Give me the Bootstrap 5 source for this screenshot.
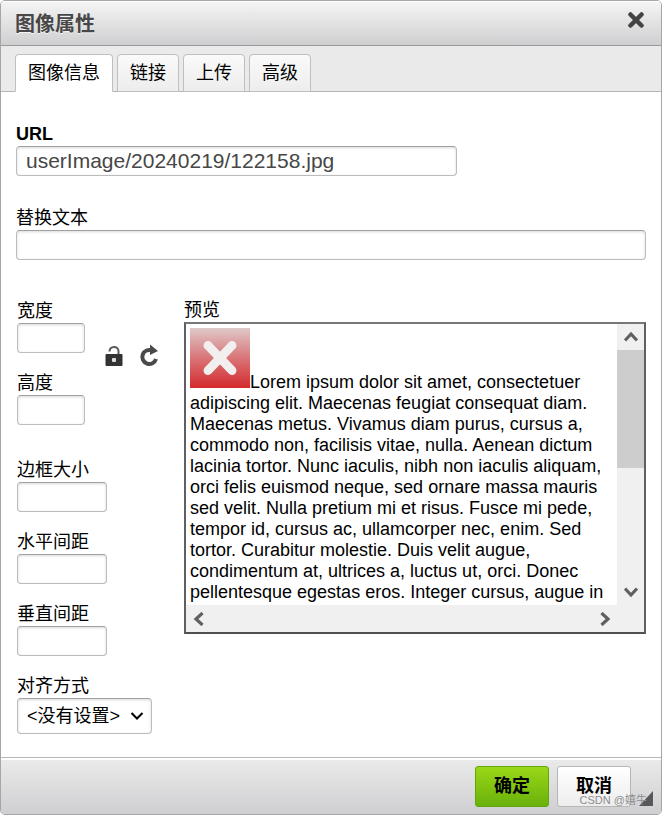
<!DOCTYPE html>
<html lang="zh-CN">
<head>
<meta charset="utf-8">
<meta name="viewport" content="width=device-width, initial-scale=1">
<title>图像属性</title>
<link href="https://cdn.jsdelivr.net/npm/bootstrap@5.3.0/dist/css/bootstrap.min.css" rel="stylesheet">
<style>
body { font-family: "Liberation Sans", "Noto Sans CJK SC", sans-serif; font-size: 18px; line-height: 24px; color: #000; background: #fff; }
.dialog { border: 1px solid #a6a6a6; border-radius: 5px; min-height: 100vh; overflow: hidden; }
.dlg-title { height: 45px; padding: 2px 16px 0 14px; border-bottom: 1px solid #999; background: linear-gradient(#f5f5f5, #cfcfd1); box-shadow: inset 0 1px 0 #fff; }
.dlg-title h1 { font-size: 20px; line-height: 24px; font-weight: 700; color: #474747; text-shadow: 0 1px 0 rgba(255,255,255,.75); }
.icon-btn { border: 0; background: none; padding: 0; line-height: 0; }
.dlg-tabs { height: 46px; padding: 0 14px; background: #eaeaea; border-bottom: 1px solid #b6b6b6; gap: 4px; }
.dlg-tabs .nav-link { height: 38px; padding: 6px 12px; line-height: 24px; color: #000; border: 1px solid #bfbfbf; border-radius: 4px 4px 0 0; background: linear-gradient(#fafafa, #ededed); margin-bottom: -1px; }
.dlg-tabs .nav-link.active { background: #fff; color: #000; border-color: #bfbfbf #bfbfbf #fff; }
.dlg-body { padding: 30px 15px 23px; }
.field label { display: block; line-height: 24px; }
.caption-text { display: block; line-height: 23px; }
.dialog .form-control, .dialog .form-select { border: 1px solid #bcbcbc; border-top-color: #a0a0a0; border-radius: 4px; box-shadow: inset 0 1px 3px rgba(0,0,0,.15); color: #000; }
.dialog .form-control { height: 30px; padding: 0 9px; font-size: 21px; line-height: 28px; color: #474747; }
.dialog .form-select { height: 36px; width: 135px; padding: 0 30px 0 9px; font-size: 18px; line-height: 32px; background-color: #fff; background-image: url("data:image/svg+xml,%3Csvg xmlns='http://www.w3.org/2000/svg' viewBox='0 0 14 10'%3E%3Cpath d='M1.5 2l5.500 5.500L12.500 2' fill='none' stroke='%23000' stroke-width='2'/%3E%3C/svg%3E"); background-position: right 7px center; background-size: 14px 10px; }
.url-box { width: 70%; }
.side { width: 168px; padding-left: 1px; flex: none; }
.w-size { width: 68px; }
.w-space { width: 90px; }
.stack-fields { display: grid; gap: 18px; }
.size-tools { gap: 15px; margin-left: 19px; padding-top: 12px; }
.spaced { margin-top: 30px; }
.lower { margin-top: 39px; }
.spacing-group { margin-top: 33px; }
.preview { min-width: 0; }
.preview-frame { border: 2px solid #606062; border-top-color: #77777a; border-bottom-color: #505052; display: grid; grid-template-columns: 1fr 27px; }
.preview-frame .view { padding: 4px 0 0 4px; font-size: 18px; line-height: 21px; height: 281px; overflow: hidden; }
.preview-frame .view svg { vertical-align: baseline; }
.bar-v, .bar-h { background: #f0f0f0; }
.bar-v .icon-btn { height: 26px; }
.thumb { height: 118px; background: #cdcdcd; }
.bar-h { grid-column: 1 / 3; height: 27px; padding: 0 33px 0 7px; }
.dlg-foot { height: 57px; padding: 0 30px 0 16px; gap: 8px; border-top: 1px solid #b6b6b6; background: linear-gradient(#ebebeb, #cfcfd1); box-shadow: inset 0 2px 0 #fff; }
.dlg-foot .btn { height: 41px; padding: 0 18px; font-size: 18px; font-weight: 700; border-radius: 3px; color: #000; }
.btn-ok { border: 1px solid #62a60a; background: linear-gradient(#9ad717, #69b10b); }
.btn-no { border: 1px solid #b6b6b6; background: linear-gradient(#fff, #ededed); }
.grip { right: 8px; bottom: 8px; width: 14px; height: 15px; background: #58585a; clip-path: polygon(100% 0, 100% 100%, 0 100%); }
.credit { right: 14px; bottom: 6px; font-size: 11px; line-height: 16px; color: #8d8d8f; white-space: nowrap; pointer-events: none; }
</style>
<script src="https://cdn.jsdelivr.net/npm/bootstrap@5.3.0/dist/js/bootstrap.bundle.min.js"></script>
</head>
<body>
<main class="dialog d-flex flex-column">
  <header class="dlg-title d-flex justify-content-between align-items-center">
    <h1 class="mb-0">图像属性</h1>
    <button class="icon-btn mb-2" type="button" aria-label="关闭"><svg width="18" height="16" viewBox="0 0 18 16"><path d="M3.500 2.500l11 11M14.500 2.500l-11 11" fill="none" stroke="#444446" stroke-width="4.500" stroke-linecap="round"/></svg></button>
  </header>
  <nav class="dlg-tabs nav align-items-end">
    <a class="nav-link active" href="#info" aria-current="page">图像信息</a>
    <a class="nav-link" href="#link">链接</a>
    <a class="nav-link" href="#upload">上传</a>
    <a class="nav-link" href="#advanced">高级</a>
  </nav>
  <form class="dlg-body flex-grow-1" id="info">
    <div class="field">
      <label class="fw-bold" for="url">URL</label>
      <input class="form-control url-box" id="url" type="text" value="userImage/20240219/122158.jpg">
    </div>
    <div class="field spaced">
      <label for="alt">替换文本</label>
      <input class="form-control" id="alt" type="text">
    </div>
    <div class="lower d-flex">
      <div class="side">
        <div class="d-flex align-items-center">
          <div class="stack-fields">
            <div class="field"><label for="w">宽度</label><input class="form-control w-size" id="w" type="text"></div>
            <div class="field"><label for="h">高度</label><input class="form-control w-size" id="h" type="text"></div>
          </div>
          <div class="size-tools d-flex align-self-start mt-4 pt-3">
            <button class="icon-btn mt-1" type="button" aria-label="锁定比例"><svg width="20" height="24" viewBox="0 0 20 24"><path d="M5.500 8.500C5.500 2.500 14.500 2.500 14.500 8V12" fill="none" stroke="#5a5a5c" stroke-width="2"/><rect x="1.500" y="11" width="17" height="12" rx="1" fill="#333335"/><rect x="8" y="15" width="4" height="4" rx="1" fill="#ddd"/></svg></button>
            <button class="icon-btn mt-1" type="button" aria-label="原始尺寸"><svg width="20" height="24" viewBox="0 0 20 24"><path d="M13 7.500A7 7 0 1 0 17 16" fill="none" stroke="#4a4a4c" stroke-width="4"/><path d="M11 1.500l8 6.500-8 4z" fill="#4a4a4c"/></svg></button>
          </div>
        </div>
        <div class="stack-fields spacing-group">
          <div class="field"><label for="border">边框大小</label><input class="form-control w-space" id="border" type="text"></div>
          <div class="field"><label for="hs">水平间距</label><input class="form-control w-space" id="hs" type="text"></div>
          <div class="field"><label for="vs">垂直间距</label><input class="form-control w-space" id="vs" type="text"></div>
          <div class="field"><label for="align">对齐方式</label><select class="form-select" id="align"><option>&lt;没有设置&gt;</option></select></div>
        </div>
      </div>
      <section class="preview flex-grow-1">
        <span class="caption-text">预览</span>
        <div class="preview-frame">
          <div class="view"><svg width="60" height="60" viewBox="0 0 60 60" role="img" aria-label="图像"><defs><linearGradient id="red" x2="0" y2="1"><stop offset="0" stop-color="#dfc9c9"/><stop offset=".5" stop-color="#d97578"/><stop offset="1" stop-color="#d42a2d"/></linearGradient></defs><path fill="url(#red)" d="M0 0h60v60H0z"/><path d="M18 17.500l24 25M42 17.500l-24 25" stroke="#f2f0ee" stroke-width="9" stroke-linecap="round"/></svg>Lorem ipsum dolor sit amet, consectetuer adipiscing elit. Maecenas feugiat consequat diam. Maecenas metus. Vivamus diam purus, cursus a, commodo non, facilisis vitae, nulla. Aenean dictum lacinia tortor. Nunc iaculis, nibh non iaculis aliquam, orci felis euismod neque, sed ornare massa mauris sed velit. Nulla pretium mi et risus. Fusce mi pede, tempor id, cursus ac, ullamcorper nec, enim. Sed tortor. Curabitur molestie. Duis velit augue, condimentum at, ultrices a, luctus ut, orci. Donec pellentesque egestas eros. Integer cursus, augue in</div>
          <div class="bar-v d-flex flex-column">
            <button class="icon-btn" type="button" aria-label="向上"><svg width="14" height="12" viewBox="0 0 14 12"><path d="M1 9.500l6-6.500 6 6.500" fill="none" stroke="#606062" stroke-width="3.200"/></svg></button>
            <div class="thumb"></div>
            <button class="icon-btn mt-auto" type="button" aria-label="向下"><svg width="14" height="12" viewBox="0 0 14 12"><path d="M1 2.500L7 9l6-6.500" fill="none" stroke="#606062" stroke-width="3.200"/></svg></button>
          </div>
          <div class="bar-h d-flex justify-content-between align-items-center">
            <button class="icon-btn" type="button" aria-label="向左"><svg width="12" height="14" viewBox="0 0 12 14"><path d="M9.500 1L3 7l6.500 6" fill="none" stroke="#606062" stroke-width="3.200"/></svg></button>
            <button class="icon-btn" type="button" aria-label="向右"><svg width="12" height="14" viewBox="0 0 12 14"><path d="M2.500 1L9 7l-6.500 6" fill="none" stroke="#606062" stroke-width="3.200"/></svg></button>
          </div>
        </div>
      </section>
    </div>
  </form>
  <footer class="dlg-foot d-flex justify-content-end align-items-center position-relative">
    <button class="btn btn-ok" type="button">确定</button>
    <button class="btn btn-no" type="button">取消</button>
    <span class="grip position-absolute"></span>
    <span class="credit position-absolute">CSDN @嬉牛</span>
  </footer>
</main>
</body>
</html>
